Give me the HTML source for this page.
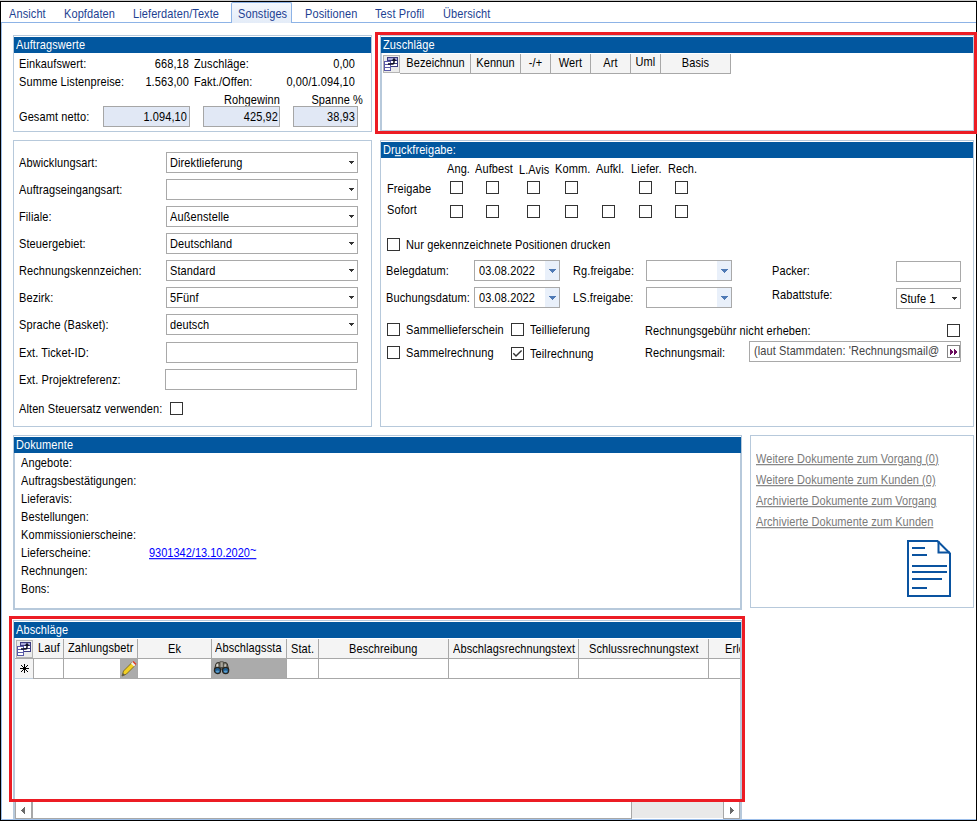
<!DOCTYPE html>
<html><head><meta charset="utf-8">
<style>
*{box-sizing:border-box}
html,body{margin:0;padding:0}
body{width:977px;height:821px;position:relative;overflow:hidden;background:#fff;font-family:"Liberation Sans",sans-serif;font-size:11px;color:#000}
.a{position:absolute}
.t{position:absolute;white-space:nowrap;line-height:13px;font-size:11px;letter-spacing:0.1px;transform:scaleY(1.12);transform-origin:0 10px}
.r{text-align:right}
.ln{position:absolute}
.gb{position:absolute;border:1px solid #b7c9db}
.hd{position:absolute;background:#02579f;color:#fff;height:16px}
.tb{position:absolute;border:1px solid #a9a9a9;background:#fff}
.ro{position:absolute;border:1px solid #a6a6a6;background:#e1e8f5}
.cb{position:absolute;width:13px;height:13px;border:1px solid #333;background:#fff}
.arr{position:absolute;width:0;height:0;border-left:3px solid transparent;border-right:3px solid transparent;border-top:3px solid #333}
.ddb{position:absolute;background:#e9f0fa}
.red{position:absolute;border:3px solid #ec1c24;z-index:10}
.tab{color:#1d3f92}
.gh{position:absolute;background:#f0f0f0;border-right:1px solid #a0a0a0;border-bottom:1px solid #a0a0a0;height:20px}
.lnk{letter-spacing:0.04px;color:#7a7a7a;text-decoration:underline;text-underline-offset:1px}
</style></head><body>

<!-- frame -->
<div class="ln" style="left:0;top:0;width:977px;height:1px;background:#cccccc"></div>
<div class="ln" style="left:0;top:1px;width:977px;height:1px;background:#000"></div>
<div class="ln" style="left:0;top:1px;width:1px;height:820px;background:#000"></div>
<div class="ln" style="left:976px;top:1px;width:1px;height:820px;background:#000"></div>
<div class="ln" style="left:0;top:820px;width:977px;height:1px;background:#000"></div>
<div class="ln" style="left:1px;top:22px;width:1px;height:798px;background:#9dbfea"></div>
<div class="ln" style="left:1px;top:819px;width:975px;height:1px;background:#9dbfea"></div>

<!-- tabs -->
<div class="ln" style="left:1px;top:22px;width:975px;height:1px;background:#8db3e6"></div>
<div class="a" style="left:231px;top:2px;width:61px;height:21px;border:1px solid #8db3e6;border-bottom:none;border-radius:2px 2px 0 0;background:linear-gradient(#f3f7fd,#e4ecf8)"></div>
<div class="t tab" style="left:9px;top:8px">Ansicht</div>
<div class="t tab" style="left:64px;top:8px">Kopfdaten</div>
<div class="t tab" style="left:133px;top:8px">Lieferdaten/Texte</div>
<div class="t tab" style="left:238px;top:8px">Sonstiges</div>
<div class="t tab" style="left:305px;top:8px">Positionen</div>
<div class="t tab" style="left:375px;top:8px">Test Profil</div>
<div class="t tab" style="left:443px;top:8px">Übersicht</div>

<!-- Auftragswerte -->
<div class="gb" style="left:13px;top:35px;width:359px;height:97px"></div>
<div class="hd" style="left:14px;top:37px;width:357px"></div>
<div class="t" style="left:16px;top:39px;color:#fff">Auftragswerte</div>
<div class="t" style="left:19px;top:58px">Einkaufswert:</div>
<div class="t r" style="left:120px;top:58px;width:69px">668,18</div>
<div class="t" style="left:194px;top:58px">Zuschläge:</div>
<div class="t r" style="left:280px;top:58px;width:75px">0,00</div>
<div class="t" style="left:19px;top:76px">Summe Listenpreise:</div>
<div class="t r" style="left:120px;top:76px;width:69px">1.563,00</div>
<div class="t" style="left:194px;top:76px">Fakt./Offen:</div>
<div class="t r" style="left:250px;top:76px;width:105px">0,00/1.094,10</div>
<div class="t r" style="left:200px;top:94px;width:80px">Rohgewinn</div>
<div class="t r" style="left:290px;top:94px;width:73px">Spanne %</div>
<div class="t" style="left:19px;top:111px">Gesamt netto:</div>
<div class="ro" style="left:103px;top:106px;width:87px;height:21px"></div>
<div class="t r" style="left:110px;top:111px;width:77px">1.094,10</div>
<div class="ro" style="left:203px;top:106px;width:77px;height:21px"></div>
<div class="t r" style="left:205px;top:111px;width:73px">425,92</div>
<div class="ro" style="left:293px;top:106px;width:65px;height:21px"></div>
<div class="t r" style="left:295px;top:111px;width:60px">38,93</div>

<!-- Zuschlaege -->
<div class="red" style="left:375px;top:32px;width:602px;height:102px"></div>
<div class="gb" style="left:380px;top:35px;width:594px;height:96px"></div>
<div class="hd" style="left:381px;top:37px;width:592px"></div>
<div class="t" style="left:383px;top:39px;color:#fff">Zuschläge</div>

<!-- left form panel -->
<div class="gb" style="left:13px;top:140px;width:359px;height:287px"></div>

<!-- left form panel content -->
<div class="t" style="left:19px;top:157px">Abwicklungsart:</div>
<div class="t" style="left:19px;top:184px">Auftragseingangsart:</div>
<div class="t" style="left:19px;top:211px">Filiale:</div>
<div class="t" style="left:19px;top:238px">Steuergebiet:</div>
<div class="t" style="left:19px;top:265px">Rechnungskennzeichen:</div>
<div class="t" style="left:19px;top:292px">Bezirk:</div>
<div class="t" style="left:19px;top:319px">Sprache (Basket):</div>
<div class="t" style="left:19px;top:347px">Ext. Ticket-ID:</div>
<div class="t" style="left:19px;top:374px">Ext. Projektreferenz:</div>
<div class="t" style="left:19px;top:403px">Alten Steuersatz verwenden:</div>
<div class="tb" style="left:166px;top:152px;width:192px;height:21px"></div>
<svg class="a" style="left:349px;top:161px" width="5" height="3" shape-rendering="crispEdges"><rect x="0" y="0" width="5" height="1" fill="#333"/><rect x="1" y="1" width="3" height="1" fill="#333"/><rect x="2" y="2" width="1" height="1" fill="#333"/></svg>
<div class="t" style="left:170px;top:157px">Direktlieferung</div>
<div class="tb" style="left:166px;top:179px;width:192px;height:21px"></div>
<svg class="a" style="left:349px;top:188px" width="5" height="3" shape-rendering="crispEdges"><rect x="0" y="0" width="5" height="1" fill="#333"/><rect x="1" y="1" width="3" height="1" fill="#333"/><rect x="2" y="2" width="1" height="1" fill="#333"/></svg>
<div class="tb" style="left:166px;top:206px;width:192px;height:21px"></div>
<svg class="a" style="left:349px;top:215px" width="5" height="3" shape-rendering="crispEdges"><rect x="0" y="0" width="5" height="1" fill="#333"/><rect x="1" y="1" width="3" height="1" fill="#333"/><rect x="2" y="2" width="1" height="1" fill="#333"/></svg>
<div class="t" style="left:170px;top:211px">Außenstelle</div>
<div class="tb" style="left:166px;top:233px;width:192px;height:21px"></div>
<svg class="a" style="left:349px;top:242px" width="5" height="3" shape-rendering="crispEdges"><rect x="0" y="0" width="5" height="1" fill="#333"/><rect x="1" y="1" width="3" height="1" fill="#333"/><rect x="2" y="2" width="1" height="1" fill="#333"/></svg>
<div class="t" style="left:170px;top:238px">Deutschland</div>
<div class="tb" style="left:166px;top:260px;width:192px;height:21px"></div>
<svg class="a" style="left:349px;top:269px" width="5" height="3" shape-rendering="crispEdges"><rect x="0" y="0" width="5" height="1" fill="#333"/><rect x="1" y="1" width="3" height="1" fill="#333"/><rect x="2" y="2" width="1" height="1" fill="#333"/></svg>
<div class="t" style="left:170px;top:265px">Standard</div>
<div class="tb" style="left:166px;top:287px;width:192px;height:21px"></div>
<svg class="a" style="left:349px;top:296px" width="5" height="3" shape-rendering="crispEdges"><rect x="0" y="0" width="5" height="1" fill="#333"/><rect x="1" y="1" width="3" height="1" fill="#333"/><rect x="2" y="2" width="1" height="1" fill="#333"/></svg>
<div class="t" style="left:170px;top:292px">5Fünf</div>
<div class="tb" style="left:166px;top:314px;width:192px;height:21px"></div>
<svg class="a" style="left:349px;top:323px" width="5" height="3" shape-rendering="crispEdges"><rect x="0" y="0" width="5" height="1" fill="#333"/><rect x="1" y="1" width="3" height="1" fill="#333"/><rect x="2" y="2" width="1" height="1" fill="#333"/></svg>
<div class="t" style="left:170px;top:319px">deutsch</div>
<div class="tb" style="left:166px;top:342px;width:192px;height:21px"></div>
<div class="tb" style="left:165px;top:369px;width:192px;height:21px"></div>
<div class="cb" style="left:170px;top:402px"></div>

<!-- Druckfreigabe -->
<div class="gb" style="left:380px;top:140px;width:594px;height:287px"></div>
<div class="hd" style="left:381px;top:142px;width:592px"></div>
<div class="t" style="left:383px;top:144px;color:#fff">Dr<u>u</u>ckfreigabe:</div>

<!-- Druckfreigabe content -->
<div class="t" style="left:447px;top:163px">Ang.</div>
<div class="t" style="left:475px;top:163px">Aufbest</div>
<div class="t" style="left:519px;top:164px">L.Avis</div>
<div class="t" style="left:555px;top:163px">Komm.</div>
<div class="t" style="left:596px;top:163px">Aufkl.</div>
<div class="t" style="left:631px;top:163px">Liefer.</div>
<div class="t" style="left:668px;top:163px">Rech.</div>
<div class="t" style="left:387px;top:183px">Freigabe</div>
<div class="t" style="left:387px;top:204px">Sofort</div>
<div class="cb" style="left:450px;top:181px"></div>
<div class="cb" style="left:486px;top:181px"></div>
<div class="cb" style="left:527px;top:181px"></div>
<div class="cb" style="left:565px;top:181px"></div>
<div class="cb" style="left:639px;top:181px"></div>
<div class="cb" style="left:675px;top:181px"></div>
<div class="cb" style="left:450px;top:205px"></div>
<div class="cb" style="left:486px;top:205px"></div>
<div class="cb" style="left:527px;top:205px"></div>
<div class="cb" style="left:565px;top:205px"></div>
<div class="cb" style="left:602px;top:205px"></div>
<div class="cb" style="left:639px;top:205px"></div>
<div class="cb" style="left:675px;top:205px"></div>
<div class="cb" style="left:387px;top:238px"></div>
<div class="t" style="left:406px;top:239px">Nur gekennzeichnete Positionen drucken</div>
<div class="t" style="left:386px;top:265px">Belegdatum:</div>
<div class="t" style="left:386px;top:292px">Buchungsdatum:</div>
<div class="tb" style="left:474px;top:260px;width:86px;height:21px"></div>
<div class="ddb" style="left:545px;top:261px;width:14px;height:19px"></div>
<svg class="a" style="left:549px;top:269px" width="7" height="4" shape-rendering="crispEdges"><rect x="0" y="0" width="7" height="1" fill="#4f7ab5"/><rect x="1" y="1" width="5" height="1" fill="#4f7ab5"/><rect x="2" y="2" width="3" height="1" fill="#4f7ab5"/><rect x="3" y="3" width="1" height="1" fill="#4f7ab5"/></svg>
<div class="t" style="left:479px;top:265px">03.08.2022</div>
<div class="tb" style="left:474px;top:287px;width:86px;height:21px"></div>
<div class="ddb" style="left:545px;top:288px;width:14px;height:19px"></div>
<svg class="a" style="left:549px;top:296px" width="7" height="4" shape-rendering="crispEdges"><rect x="0" y="0" width="7" height="1" fill="#4f7ab5"/><rect x="1" y="1" width="5" height="1" fill="#4f7ab5"/><rect x="2" y="2" width="3" height="1" fill="#4f7ab5"/><rect x="3" y="3" width="1" height="1" fill="#4f7ab5"/></svg>
<div class="t" style="left:479px;top:292px">03.08.2022</div>
<div class="t" style="left:573px;top:265px">Rg.freigabe:</div>
<div class="t" style="left:573px;top:292px">LS.freigabe:</div>
<div class="tb" style="left:646px;top:260px;width:86px;height:21px"></div>
<div class="ddb" style="left:717px;top:261px;width:14px;height:19px"></div>
<svg class="a" style="left:721px;top:269px" width="7" height="4" shape-rendering="crispEdges"><rect x="0" y="0" width="7" height="1" fill="#4f7ab5"/><rect x="1" y="1" width="5" height="1" fill="#4f7ab5"/><rect x="2" y="2" width="3" height="1" fill="#4f7ab5"/><rect x="3" y="3" width="1" height="1" fill="#4f7ab5"/></svg>
<div class="tb" style="left:646px;top:287px;width:86px;height:21px"></div>
<div class="ddb" style="left:717px;top:288px;width:14px;height:19px"></div>
<svg class="a" style="left:721px;top:296px" width="7" height="4" shape-rendering="crispEdges"><rect x="0" y="0" width="7" height="1" fill="#4f7ab5"/><rect x="1" y="1" width="5" height="1" fill="#4f7ab5"/><rect x="2" y="2" width="3" height="1" fill="#4f7ab5"/><rect x="3" y="3" width="1" height="1" fill="#4f7ab5"/></svg>
<div class="t" style="left:772px;top:265px">Packer:</div>
<div class="tb" style="left:896px;top:261px;width:65px;height:21px"></div>
<div class="t" style="left:772px;top:289px">Rabattstufe:</div>
<div class="tb" style="left:896px;top:288px;width:65px;height:21px"></div>
<div class="t" style="left:900px;top:293px">Stufe 1</div>
<svg class="a" style="left:952px;top:297px" width="5" height="3" shape-rendering="crispEdges"><rect x="0" y="0" width="5" height="1" fill="#333"/><rect x="1" y="1" width="3" height="1" fill="#333"/><rect x="2" y="2" width="1" height="1" fill="#333"/></svg>
<div class="cb" style="left:387px;top:323px"></div>
<div class="t" style="left:406px;top:324px">Sammellieferschein</div>
<div class="cb" style="left:511px;top:323px"></div>
<div class="t" style="left:530px;top:324px">Teillieferung</div>
<div class="cb" style="left:387px;top:346px"></div>
<div class="t" style="left:406px;top:347px">Sammelrechnung</div>
<div class="cb" style="left:511px;top:347px"></div>
<svg class="a" style="left:511px;top:347px" width="13" height="13"><path d="M2.3 6.3L5 9.1L10.6 3.4" fill="none" stroke="#333" stroke-width="1.4"/></svg>
<div class="t" style="left:530px;top:348px">Teilrechnung</div>
<div class="t" style="left:645px;top:325px">Rechnungsgebühr nicht erheben:</div>
<div class="cb" style="left:947px;top:324px"></div>
<div class="t" style="left:645px;top:347px">Rechnungsmail:</div>
<div class="tb" style="left:749px;top:341px;width:212px;height:21px"></div>
<div class="t" style="left:754px;top:345px;color:#444">(laut Stammdaten: 'Rechnungsmail@</div>
<div class="a" style="left:947px;top:345px;width:13px;height:13px;border:1px solid #858585;background:#fff"></div>
<svg class="a" style="left:950px;top:349px" width="8" height="6" shape-rendering="crispEdges"><path d="M0 0h1v1h1v1h1v2h-1v1h-1v1h-1z M4 0h1v1h1v1h1v2h-1v1h-1v1h-1z" fill="#6a0c5c"/></svg>

<!-- Dokumente -->
<div class="gb" style="left:13px;top:435px;width:729px;height:175px"></div>
<div class="ln" style="left:740px;top:453px;width:1px;height:156px;background:#b7c9db"></div>
<div class="ln" style="left:13px;top:608px;width:728px;height:1px;background:#b7c9db"></div>
<div class="hd" style="left:14px;top:437px;width:727px"></div>
<div class="t" style="left:16px;top:439px;color:#fff">Dokumente</div>

<!-- links panel -->
<div class="gb" style="left:750px;top:435px;width:224px;height:173px"></div>

<!-- Abschlaege -->
<div class="red" style="left:9px;top:616px;width:736px;height:186px"></div>
<div class="gb" style="left:13px;top:620px;width:729px;height:199px;border-bottom:none"></div>
<div class="hd" style="left:14px;top:622px;width:727px"></div>
<div class="t" style="left:16px;top:624px;color:#fff">Abschläge</div>

<!-- Zuschlaege grid -->
<div class="ln" style="left:380px;top:53px;width:2px;height:78px;background:#b7c9db"></div>
<div class="a" style="left:400px;top:54px;width:331px;height:20px;background:#f4f4f4;border-bottom:1px solid #a8a8a8"></div>
<div class="ln" style="left:470px;top:54px;width:1px;height:19px;background:#a8a8a8"></div>
<div class="ln" style="left:520px;top:54px;width:1px;height:19px;background:#a8a8a8"></div>
<div class="ln" style="left:550px;top:54px;width:1px;height:19px;background:#a8a8a8"></div>
<div class="ln" style="left:590px;top:54px;width:1px;height:19px;background:#a8a8a8"></div>
<div class="ln" style="left:630px;top:54px;width:1px;height:19px;background:#a8a8a8"></div>
<div class="ln" style="left:660px;top:54px;width:1px;height:19px;background:#a8a8a8"></div>
<div class="ln" style="left:730px;top:54px;width:1px;height:19px;background:#a8a8a8"></div>
<div class="t" style="left:401px;top:57px;width:69px;text-align:center">Bezeichnun</div>
<div class="t" style="left:471px;top:57px;width:49px;text-align:center">Kennun</div>
<div class="t" style="left:521px;top:57px;width:29px;text-align:center">-/+</div>
<div class="t" style="left:551px;top:57px;width:39px;text-align:center">Wert</div>
<div class="t" style="left:591px;top:57px;width:39px;text-align:center">Art</div>
<div class="t" style="left:631px;top:56px;width:29px;text-align:center">Uml</div>
<div class="t" style="left:661px;top:57px;width:69px;text-align:center">Basis</div>
<div class="a" style="left:383px;top:55px;width:17px;height:18px;border:1px solid #b4b4b4;background:#ebebeb"></div>
<svg class="a" style="left:384px;top:56px" width="15" height="15">
<g shape-rendering="crispEdges"><rect x="3" y="1" width="11" height="10" fill="#3a3a80"/><rect x="4" y="2" width="9" height="2" fill="#a8a8d8"/><rect x="7" y="5" width="6" height="2" fill="#fff"/><rect x="7" y="8" width="6" height="2" fill="#fff"/>
<rect x="0" y="5" width="7" height="10" fill="#5a5aa8"/><rect x="1" y="6" width="5" height="2" fill="#fff"/><rect x="1" y="9" width="5" height="2" fill="#fff"/><rect x="1" y="12" width="5" height="2" fill="#fff"/></g>
<path d="M4 8H8.5Q10 8 10 6.2V4.2" fill="none" stroke="#0c0c20" stroke-width="1.5"/><path d="M7.7 4.8L10 1.8L12.3 4.8Z" fill="#0c0c20"/>
</svg>
<!-- Dokumente content -->
<div class="ln" style="left:13px;top:453px;width:2px;height:155px;background:#b7c9db"></div>
<div class="t" style="left:21px;top:457px">Angebote:</div>
<div class="t" style="left:21px;top:475px">Auftragsbestätigungen:</div>
<div class="t" style="left:21px;top:493px">Lieferavis:</div>
<div class="t" style="left:21px;top:511px">Bestellungen:</div>
<div class="t" style="left:21px;top:529px">Kommissionierscheine:</div>
<div class="t" style="left:21px;top:547px">Lieferscheine:</div>
<div class="t" style="left:21px;top:565px">Rechnungen:</div>
<div class="t" style="left:21px;top:583px">Bons:</div>
<div class="t" style="left:149px;top:547px;color:#0000ff;text-decoration:underline;letter-spacing:0">9301342/13.10.2020<span style="position:relative;top:-3px">~</span></div>
<!-- links -->
<div class="t lnk" style="left:756px;top:453px">Weitere Dokumente zum Vorgang (0)</div>
<div class="t lnk" style="left:756px;top:474px">Weitere Dokumente zum Kunden (0)</div>
<div class="t lnk" style="left:756px;top:495px">Archivierte Dokumente zum Vorgang</div>
<div class="t lnk" style="left:756px;top:516px">Archivierte Dokumente zum Kunden</div>
<svg class="a" style="left:900px;top:535px" width="60" height="70">
<path d="M8 6H37.5L50 18.5V61H8Z" fill="none" stroke="#0a53a0" stroke-width="2"/>
<path d="M38.5 6V17.5H50" fill="none" stroke="#0a53a0" stroke-width="2"/>
<g fill="#0a53a0" shape-rendering="crispEdges">
<rect x="12" y="12" width="13" height="2"/>
<rect x="12" y="19" width="15" height="2"/>
<rect x="12" y="30" width="35" height="2"/>
<rect x="12" y="36" width="35" height="2"/>
<rect x="12" y="43" width="30" height="2"/>
<rect x="12" y="52" width="15" height="2"/>
</g></svg>
<!-- Abschlaege grid -->
<div class="ln" style="left:13px;top:638px;width:2px;height:181px;background:#b7c9db"></div>
<div class="ln" style="left:740px;top:638px;width:2px;height:181px;background:#b7c9db"></div>
<div class="a" style="left:15px;top:639px;width:725px;height:20px;background:#f4f4f4;border-bottom:1px solid #a8a8a8"></div>
<div class="a" style="left:15px;top:659px;width:18px;height:20px;background:#f4f4f4;border-bottom:1px solid #bfcddb"></div>
<div class="a" style="left:34px;top:659px;width:706px;height:20px;background:#fff;border-bottom:1px solid #a8a8a8"></div>
<div class="a" style="left:120px;top:659px;width:17px;height:19px;background:#ababab"></div>
<div class="a" style="left:212px;top:659px;width:74px;height:19px;background:#ababab"></div>
<div class="ln" style="left:33px;top:658px;width:1px;height:21px;background:#a8a8a8"></div>
<div class="ln" style="left:63px;top:639px;width:1px;height:40px;background:#a8a8a8"></div>
<div class="ln" style="left:137px;top:639px;width:1px;height:40px;background:#a8a8a8"></div>
<div class="ln" style="left:211px;top:639px;width:1px;height:40px;background:#a8a8a8"></div>
<div class="ln" style="left:286px;top:639px;width:1px;height:40px;background:#a8a8a8"></div>
<div class="ln" style="left:318px;top:639px;width:1px;height:40px;background:#a8a8a8"></div>
<div class="ln" style="left:448px;top:639px;width:1px;height:40px;background:#a8a8a8"></div>
<div class="ln" style="left:578px;top:639px;width:1px;height:40px;background:#a8a8a8"></div>
<div class="ln" style="left:708px;top:639px;width:1px;height:40px;background:#a8a8a8"></div>
<div class="a" style="left:16px;top:640px;width:17px;height:18px;border:1px solid #b4b4b4;background:#ebebeb"></div>
<svg class="a" style="left:17px;top:641px" width="15" height="15">
<g shape-rendering="crispEdges"><rect x="3" y="1" width="11" height="10" fill="#3a3a80"/><rect x="4" y="2" width="9" height="2" fill="#a8a8d8"/><rect x="7" y="5" width="6" height="2" fill="#fff"/><rect x="7" y="8" width="6" height="2" fill="#fff"/>
<rect x="0" y="5" width="7" height="10" fill="#5a5aa8"/><rect x="1" y="6" width="5" height="2" fill="#fff"/><rect x="1" y="9" width="5" height="2" fill="#fff"/><rect x="1" y="12" width="5" height="2" fill="#fff"/></g>
<path d="M4 8H8.5Q10 8 10 6.2V4.2" fill="none" stroke="#0c0c20" stroke-width="1.5"/><path d="M7.7 4.8L10 1.8L12.3 4.8Z" fill="#0c0c20"/>
</svg>
<div class="t" style="left:38px;top:642px">Lauf</div>
<div class="t" style="left:68px;top:642px">Zahlungsbetr</div>
<div class="t" style="left:168px;top:643px">Ek</div>
<div class="t" style="left:215px;top:642px">Abschlagssta</div>
<div class="t" style="left:291px;top:643px">Stat.</div>
<div class="t" style="left:349px;top:643px">Beschreibung</div>
<div class="t" style="left:453px;top:643px">Abschlagsrechnungstext</div>
<div class="t" style="left:589px;top:643px">Schlussrechnungstext</div>
<div class="a" style="left:709px;top:639px;width:31px;height:19px;overflow:hidden"><div class="t" style="left:16px;top:4px">Erlös</div></div>
<svg class="a" style="left:20px;top:664px" width="9" height="9" shape-rendering="crispEdges"><g fill="#000"><rect x="4" y="0" width="1" height="9"/><rect x="0" y="4" width="9" height="1"/><rect x="3" y="3" width="3" height="3"/><rect x="1" y="1" width="1" height="1"/><rect x="2" y="2" width="1" height="1"/><rect x="7" y="1" width="1" height="1"/><rect x="6" y="2" width="1" height="1"/><rect x="1" y="7" width="1" height="1"/><rect x="2" y="6" width="1" height="1"/><rect x="7" y="7" width="1" height="1"/><rect x="6" y="6" width="1" height="1"/></g></svg>
<svg class="a" style="left:120px;top:659px" width="17" height="19">
<path d="M2 17 L3.5 12 L12 3.5 L15 6.5 L6.5 15 Z" fill="#f2d024" stroke="#6b5a10" stroke-width="0.8"/>
<path d="M12 3.5 L13.5 2 L16.5 5 L15 6.5 Z" fill="#e03a20"/>
<path d="M11 4.5 L12.5 3 L15.5 6 L14 7.5 Z" fill="#f0f0f0"/>
<path d="M2 17 L3 14 L5 16 Z" fill="#555"/>
</svg>
<svg class="a" style="left:211px;top:659px" width="22" height="18">
<path d="M3.4 11L5 4.6Q6 3.2 8 3.6L10 4.6V11Z" fill="#777368" stroke="#2a2822" stroke-width="0.9"/>
<path d="M17.8 11L16.2 4.6Q15.2 3.2 13.2 3.6L11.2 4.6V11Z" fill="#777368" stroke="#2a2822" stroke-width="0.9"/>
<rect x="9" y="2.8" width="3.2" height="5.8" fill="#a9a59b" stroke="#3a382f" stroke-width="0.7"/>
<ellipse cx="6.3" cy="6.8" rx="1" ry="2.1" fill="#dcd9d1"/>
<ellipse cx="14.2" cy="6.8" rx="0.9" ry="1.9" fill="#c9c6be"/>
<circle cx="6.5" cy="11.5" r="3.1" fill="#1f5d92" stroke="#26241d" stroke-width="1.2"/>
<circle cx="14.6" cy="11.5" r="3.1" fill="#1f5d92" stroke="#26241d" stroke-width="1.2"/>
<ellipse cx="6.5" cy="12.6" rx="1.8" ry="1.1" fill="#5b9dc8"/>
<ellipse cx="14.6" cy="12.6" rx="1.8" ry="1.1" fill="#5b9dc8"/>
</svg>
<!-- scrollbar -->
<div class="a" style="left:15px;top:802px;width:617px;height:17px;background:#fff;border:1px solid #a8a8a8;border-top:none"></div>
<div class="ln" style="left:31px;top:802px;width:2px;height:16px;background:#a8a8a8"></div>
<div class="a" style="left:632px;top:802px;width:91px;height:16px;background:#e9e9e9"></div>
<div class="a" style="left:723px;top:802px;width:17px;height:17px;background:#fff;border:1px solid #a8a8a8;border-top:none"></div>
<svg class="a" style="left:21px;top:807px" width="4" height="7" shape-rendering="crispEdges"><path d="M3 0h1v7h-1v-1h-1v-1h-1v-1h-1v-1h1v-1h1v-1h1z" fill="#6a6a6a"/></svg>
<svg class="a" style="left:730px;top:807px" width="4" height="7" shape-rendering="crispEdges"><path d="M0 0h1v1h1v1h1v1h1v1h-1v1h-1v1h-1v1h-1z" fill="#6a6a6a"/></svg>

</body></html>
